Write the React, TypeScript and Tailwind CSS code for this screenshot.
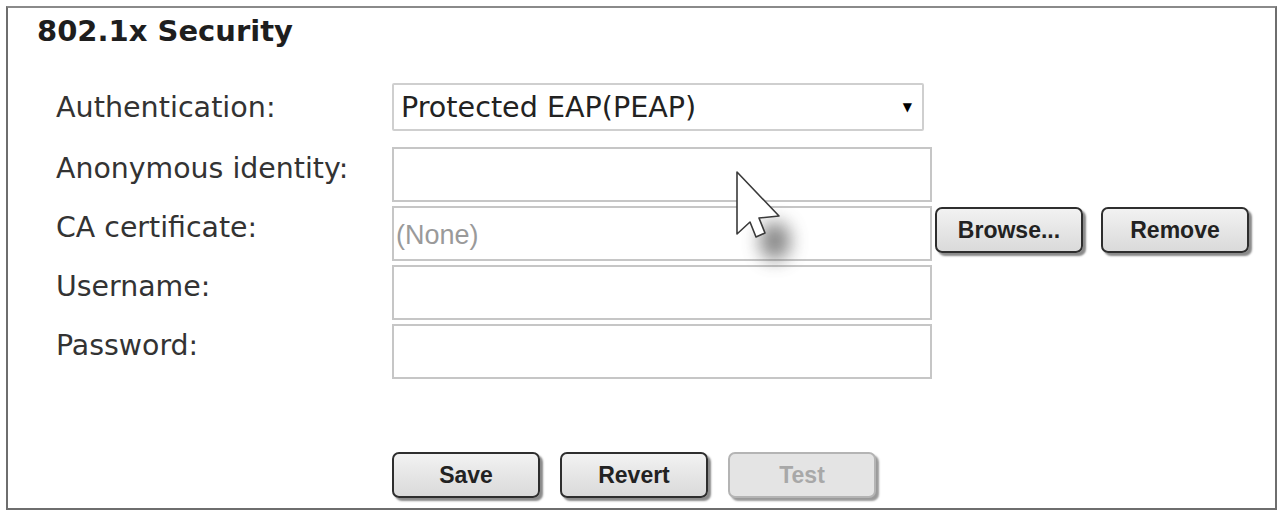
export default function App() {
  const rows = [
    { label: "Anonymous identity:", value: "" },
    { label: "CA certificate:", value: "(None)" },
    { label: "Username:", value: "" },
    { label: "Password:", value: "" },
  ];

  const btn =
    "flex h-[46px] w-[148px] items-center justify-center rounded-[7px] border-2 border-[#2e2e2e] bg-gradient-to-b from-[#f2f2f2] to-[#dadada] text-[23px] font-bold text-[#222] shadow-[3px_3px_2px_#8a8a8a]";

  return (
    <div
      className="relative h-[512px] w-[1279px] overflow-hidden bg-white pb-[2px] pl-[6px] pr-[2px] pt-[6px]"
      style={{ fontFamily: '"DejaVu Sans", Verdana, sans-serif' }}
    >
      <div className="flex h-full flex-col border-2 border-[#6e6e6e] border-t-[#8a8a8a]">
        <h1 className="pl-[29px] pt-[9px] text-[29px] font-bold leading-none text-[#1e1e1e]">
          802.1x Security
        </h1>

        <div className="mt-[37px] flex items-center pl-[48px]">
          <span className="w-[336px] text-[28.6px] leading-none text-[#333]">
            Authentication:
          </span>
          <div className="flex h-[48px] w-[532px] items-center justify-between rounded-[2px] border-2 border-[#cfcfcf] pl-[7px] pr-[10px]">
            <span className="text-[28.6px] leading-none text-[#222]">
              Protected EAP(PEAP)
            </span>
            <span className="text-[12px] text-black">▼</span>
          </div>
        </div>

        <div className="mt-[16px] flex flex-col gap-[4px] pl-[48px]">
          {rows.map((row) => (
            <div key={row.label} className="flex items-center">
              <span className="w-[336px] pb-[10px] text-[28.4px] leading-none text-[#333]">
                {row.label}
              </span>
              <div className="flex h-[55px] w-[540px] items-center border-2 border-[#c6c6c6] pl-[2px]">
                {row.value && (
                  <span
                    className="pt-[4px] text-[27px] leading-none text-[#9a9a9a]"
                    style={{ fontFamily: '"Liberation Sans", Arial, sans-serif' }}
                  >
                    {row.value}
                  </span>
                )}
              </div>
              {row.label === "CA certificate:" && (
                <div
                  className="flex gap-[18px] self-start pl-[3px] pt-[1px]"
                  style={{ fontFamily: '"Liberation Sans", Arial, sans-serif' }}
                >
                  <button className={btn}>Browse...</button>
                  <button className={btn}>Remove</button>
                </div>
              )}
            </div>
          ))}
        </div>

        <div
          className="mt-[73px] flex gap-[20px] pl-[384px]"
          style={{ fontFamily: '"Liberation Sans", Arial, sans-serif' }}
        >
          <button className={btn}>Save</button>
          <button className={btn}>Revert</button>
          <button className="flex h-[46px] w-[148px] items-center justify-center rounded-[7px] border-2 border-[#b4b4b4] bg-[#e4e4e4] text-[23px] font-bold text-[#a8a8a8] shadow-[3px_3px_2px_#9a9a9a]">
            Test
          </button>
        </div>
      </div>

      {/* mouse pointer over the form */}
      <div className="absolute left-[760px] top-[222px] h-[38px] w-[30px] rounded-full bg-[#555] opacity-70 blur-[9px]" />
      <svg
        className="absolute left-[735px] top-[170px]"
        width="48"
        height="70"
        viewBox="0 0 48 70"
      >
        <path
          d="M2 2 L2 64 L15 52 L21 67 L30 63 L24 48 L44 46 Z"
          fill="#fff"
          stroke="#3a3a3a"
          strokeWidth="1.6"
          strokeLinejoin="round"
        />
      </svg>
    </div>
  );
}
